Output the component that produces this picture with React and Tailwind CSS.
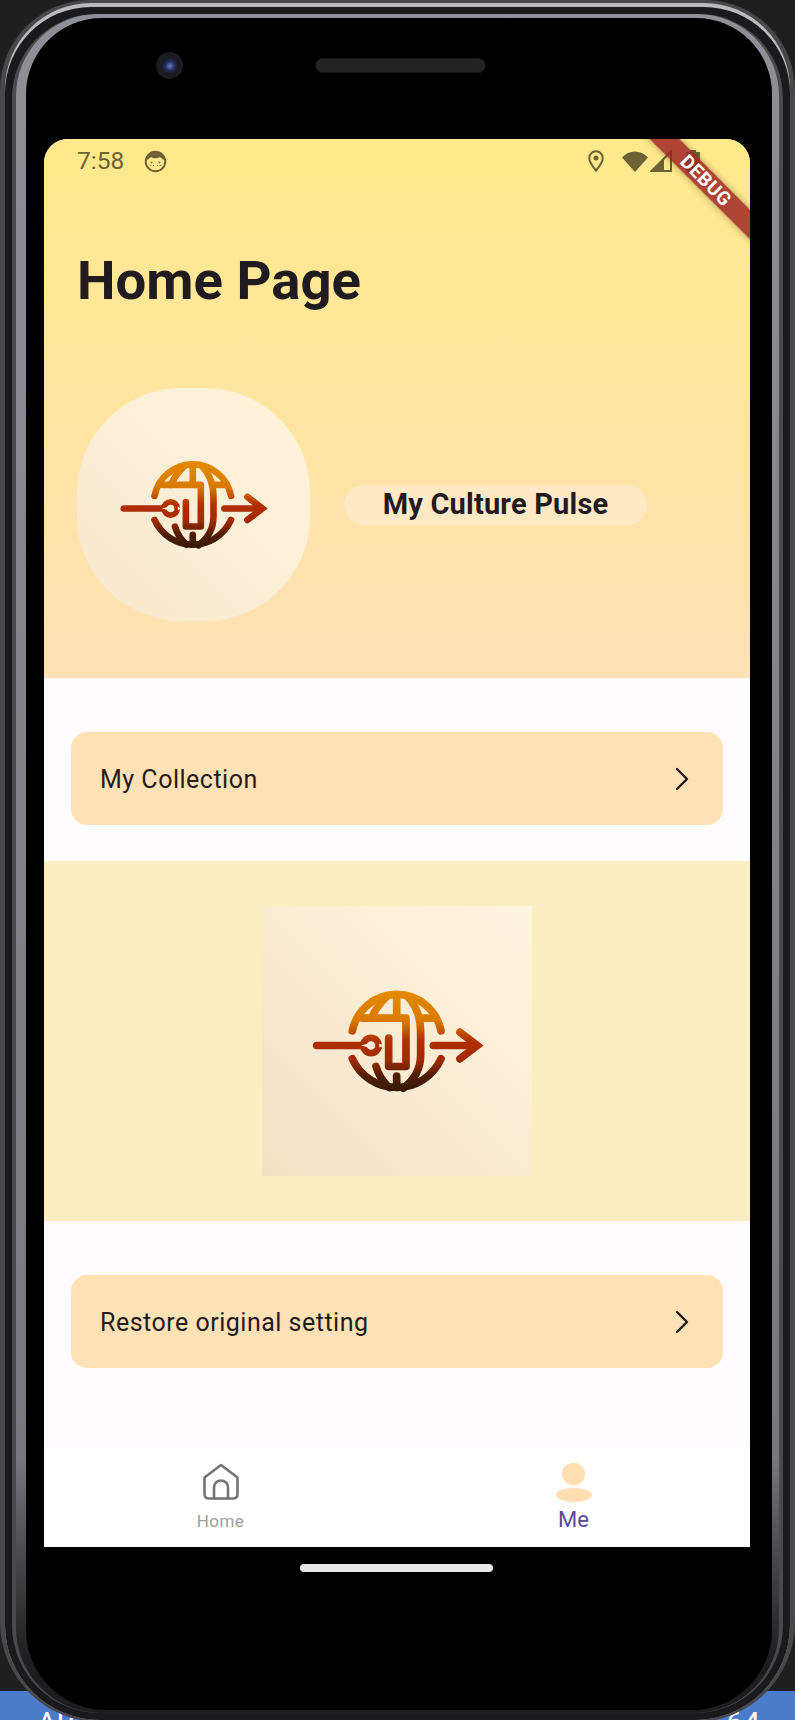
import { useId } from 'react';
import { ChevronRight } from 'lucide-react';

function Logo({ className }) {
  const id = useId();
  return (
    <svg viewBox="60 90 525 320" className={className} fill="none" stroke={`url(#${id})`} strokeWidth="23" strokeLinecap="round" strokeLinejoin="round">
      <defs>
        <linearGradient id={id} gradientUnits="userSpaceOnUse" x1="0" y1="97" x2="0" y2="400">
          <stop offset="0" stopColor="#e38a00" />
          <stop offset="0.3" stopColor="#d87a02" />
          <stop offset="0.5" stopColor="#b02f02" />
          <stop offset="0.68" stopColor="#a32a02" />
          <stop offset="0.85" stopColor="#4f1d06" />
          <stop offset="1" stopColor="#351a08" />
        </linearGradient>
      </defs>
      {/* top and bottom of globe */}
      <path d="M187 218A135.600 135.600 0 0 1 453 218" />
      <path d="M187 302A146 146 0 0 0 453 302" />
      {/* meridians */}
      <path d="M320 112V166" />
      <path d="M320 354V388" />
      <path d="M288 118C268 136 254 158 244 180" />
      <path d="M258 325C266 352 280 372 298 388" />
      <path d="M352 114C380 144 392 180 392 222V290C392 330 372 366 340 390" />
      {/* latitude and S trace */}
      <path d="M216 180H348V325H296V240" />
      <path d="M392 180H432" />
      {/* left arrow line with node */}
      <path d="M80 262H212" />
      <circle cx="243" cy="262" r="23" strokeWidth="20" />
      <path d="M212 262L236 256L244 262L236 268Z" fill="#fbeed9" stroke="none" />
      <path d="M268 256L282 262L268 268Z" fill="#fbeed9" stroke="none" />
      {/* arrow */}
      <path d="M430 262H556" />
      <path d="M510 222L562 262L510 302" strokeLinejoin="miter" />
    </svg>
  );
}

function NavRow({ label }) {
  return (
    <div className="mx-[27px] h-[93px] flex items-center justify-between rounded-[16px] bg-[#ffe1b6] pl-[29px] pr-[21px]">
      <span className="pt-[2px] text-[25px] tracking-[0.5px] text-[#1f1b1e]">{label}</span>
      <ChevronRight size={40} strokeWidth={1.45} color="#1f1b1e" />
    </div>
  );
}

function StatusBar() {
  return (
    <div className="h-[44px] pl-[33px] pr-[50px] flex items-center text-[#6c6236]">
      <span className="text-[24.500px] leading-none">7:58</span>
      <svg viewBox="0 0 24 24" className="w-[23px] h-[23px] ml-[20px]">
        <circle cx="12" cy="12" r="10.2" fill="none" stroke="currentColor" strokeWidth="2" />
        <path d="M2.5 11C3 5 7 1.8 12 1.8S21 5 21.5 11C19 9 17.500 7.500 16 7.500C14 9 10 9 8 7.500C6.500 7.500 5 9 2.500 11Z" fill="currentColor" />
        <g fill="currentColor">
          <circle cx="8" cy="13" r="0.9" />
          <circle cx="16" cy="13" r="0.9" />
          <circle cx="7" cy="16" r="0.7" />
          <circle cx="10" cy="16" r="0.7" />
          <circle cx="14" cy="16" r="0.7" />
          <circle cx="17" cy="16" r="0.7" />
        </g>
      </svg>
      <div className="flex-1" />
      <svg viewBox="0 0 16 22" className="w-[16px] h-[22px]">
        <path d="M8 1.200C4.300 1.200 1.200 4.200 1.200 8C1.200 12.500 8 20.500 8 20.500S14.800 12.500 14.800 8C14.800 4.200 11.700 1.200 8 1.200Z" fill="none" stroke="currentColor" strokeWidth="2" />
        <circle cx="8" cy="8" r="2.500" fill="currentColor" />
      </svg>
      <svg viewBox="0 0 26 21" className="w-[26px] h-[21px] ml-[18px]">
        <path d="M0 6.500C3.500 2.500 8 0.500 13 0.500S22.500 2.500 26 6.500L13 21Z" fill="currentColor" />
      </svg>
      <svg viewBox="0 0 22 22" className="w-[22px] h-[22px] ml-[2px]">
        <path d="M1.500 21H21V1.500Z" fill="none" stroke="currentColor" strokeWidth="2" />
        <path d="M1.500 21L14 8.500V21Z" fill="currentColor" />
      </svg>
      <svg viewBox="0 0 14 22" className="w-[14px] h-[22px] ml-[14px]">
        <path d="M4 0H10V2H14V22H0V2H4Z" fill="currentColor" />
      </svg>
    </div>
  );
}

function BottomNav() {
  return (
    <div className="h-[102px] grid grid-cols-2 bg-white border-t border-[#faf5fa]">
      <div className="flex flex-col items-center pt-[17px]">
        <svg viewBox="0 0 36 37" className="w-[36px] h-[37px]" fill="none" stroke="#757575" strokeWidth="2.600" strokeLinejoin="round">
          <path d="M18 2L34.500 14.500V31C34.500 33.800 33 35.500 30 35.500H25V24.500C25 20.500 22 17.500 18 17.500S11 20.500 11 24.500V35.500H6C3 35.500 1.500 33.800 1.500 31V14.500Z" />
          <path d="M11 35.500H25" />
        </svg>
        <span className="mt-[11px] text-[17px] leading-[20px] tracking-[0.4px] text-[#9e9e9e]">Home</span>
      </div>
      <div className="flex flex-col items-center pt-[17px]">
        <div className="w-[23px] h-[22px] rounded-full bg-[#ffdfb2]" />
        <div className="mt-[3px] w-[36px] h-[14px] rounded-[50%] bg-[#ffdfb2]" />
        <span className="mt-[6px] text-[22px] leading-[24px] text-[#5b4a9c]">Me</span>
      </div>
    </div>
  );
}

export default function App() {
  return (
    <div className="relative w-[795px] h-[1720px] overflow-hidden bg-[#1f1f1f] font-[Roboto,sans-serif]">
      {/* what is behind the device frame */}
      <div className="absolute inset-x-0 bottom-0 h-[29px] bg-[#4a7cc9] text-white text-[30px] leading-[30px]">
        <span className="absolute left-[37px] top-[17px]">AB</span>
        <span className="absolute right-[35px] top-[17px]">64</span>
      </div>

      {/* device frame: each ring is a nested rounded box */}
      <div className="absolute inset-x-0 top-0 h-[1722px] rounded-t-[90px] rounded-b-[100px] bg-[#48484a] px-[5px] pt-[3px] pb-[2px]">
        <div className="h-full rounded-t-[86px] rounded-b-[95px] bg-[#b9b9be] pt-[4px]">
          <div className="h-full rounded-t-[86px] rounded-b-[95px] bg-[#1a1a1c] p-[7px]">
            <div className="h-full rounded-t-[84px] rounded-b-[88px] bg-[#4a4a4d] px-[4px]">
              <div className="h-full rounded-t-[82px] rounded-b-[85px] pl-[10px] pr-[7px] pt-[4px] pb-[3px] bg-linear-to-b from-[#8f8f97] via-[#77777e] via-85% to-[#1d1d1f] to-97%">
                <div className="relative h-full rounded-t-[76px] rounded-b-[80px] bg-black pl-[18px] pr-[22px] pt-[121px]">
                  {/* camera and speaker */}
                  <div className="absolute left-[130px] top-[34px] w-[27px] h-[27px] rounded-full bg-[#1b1c22] flex items-center justify-center">
                    <div className="w-[14px] h-[14px] rounded-full bg-[radial-gradient(circle,#6d7fc0_0%,#23305f_45%,#0c1020_100%)]" />
                  </div>
                  <div className="absolute left-[289px] top-[40px] w-[171px] h-[15px] rounded-full bg-[#232323] border border-[#161616]" />

                  {/* screen */}
                  <div className="relative w-[706px] h-[1408px] rounded-t-[24px] overflow-hidden bg-[#fffcff] flex flex-col">
                    <div className="h-[539px] bg-linear-to-b from-[#ffe98a] to-[#ffe1b6]">
                      <StatusBar />
                      <h1 className="mt-[67px] pl-[33px] text-[54.500px] leading-[60px] font-bold text-[#1f1b1e]">Home Page</h1>
                      <div className="mt-[78px] pl-[33px] flex items-center">
                        <div className="w-[233px] h-[233px] rounded-[45%] flex items-center justify-center bg-linear-to-tr from-[#f7e6cb] via-[#fcefd8] to-[#fff3dc]">
                          <Logo className="w-[151px] h-[92px]" />
                        </div>
                        <div className="ml-[34px] w-[303px] h-[40px] rounded-full bg-[#ffe9c4] flex items-center justify-center text-[29px] font-bold tracking-[0.2px] text-[#1f1b1e]">
                          My Culture Pulse
                        </div>
                      </div>
                    </div>

                    <div className="pt-[54px]"><NavRow label="My Collection" /></div>

                    <div className="mt-[36px] h-[360px] bg-[#fbeec3] flex items-center justify-center">
                      <div className="w-[270px] h-[270px] flex items-center justify-center bg-linear-to-tr from-[#f4dfc4] via-[#fbecd4] to-[#fff4de]">
                        <Logo className="w-[175px] h-[107px]" />
                      </div>
                    </div>

                    <div className="pt-[54px]"><NavRow label="Restore original setting" /></div>

                    <div className="flex-1" />
                    <BottomNav />

                    {/* debug banner */}
                    <div className="absolute right-[-56px] top-[31px] w-[200px] h-[21px] rotate-45 bg-[rgba(160,39,35,0.85)] shadow-[0_0_6px_rgba(60,40,0,0.45)] flex items-center justify-center text-white text-[19px] leading-none font-bold tracking-[0.5px]">
                      DEBUG
                    </div>
                  </div>

                  {/* home indicator */}
                  <div className="ml-[256px] mt-[17px] w-[193px] h-[8px] rounded-full bg-[#e8e8e8]" />
                </div>
              </div>
            </div>
          </div>
        </div>
      </div>
    </div>
  );
}
